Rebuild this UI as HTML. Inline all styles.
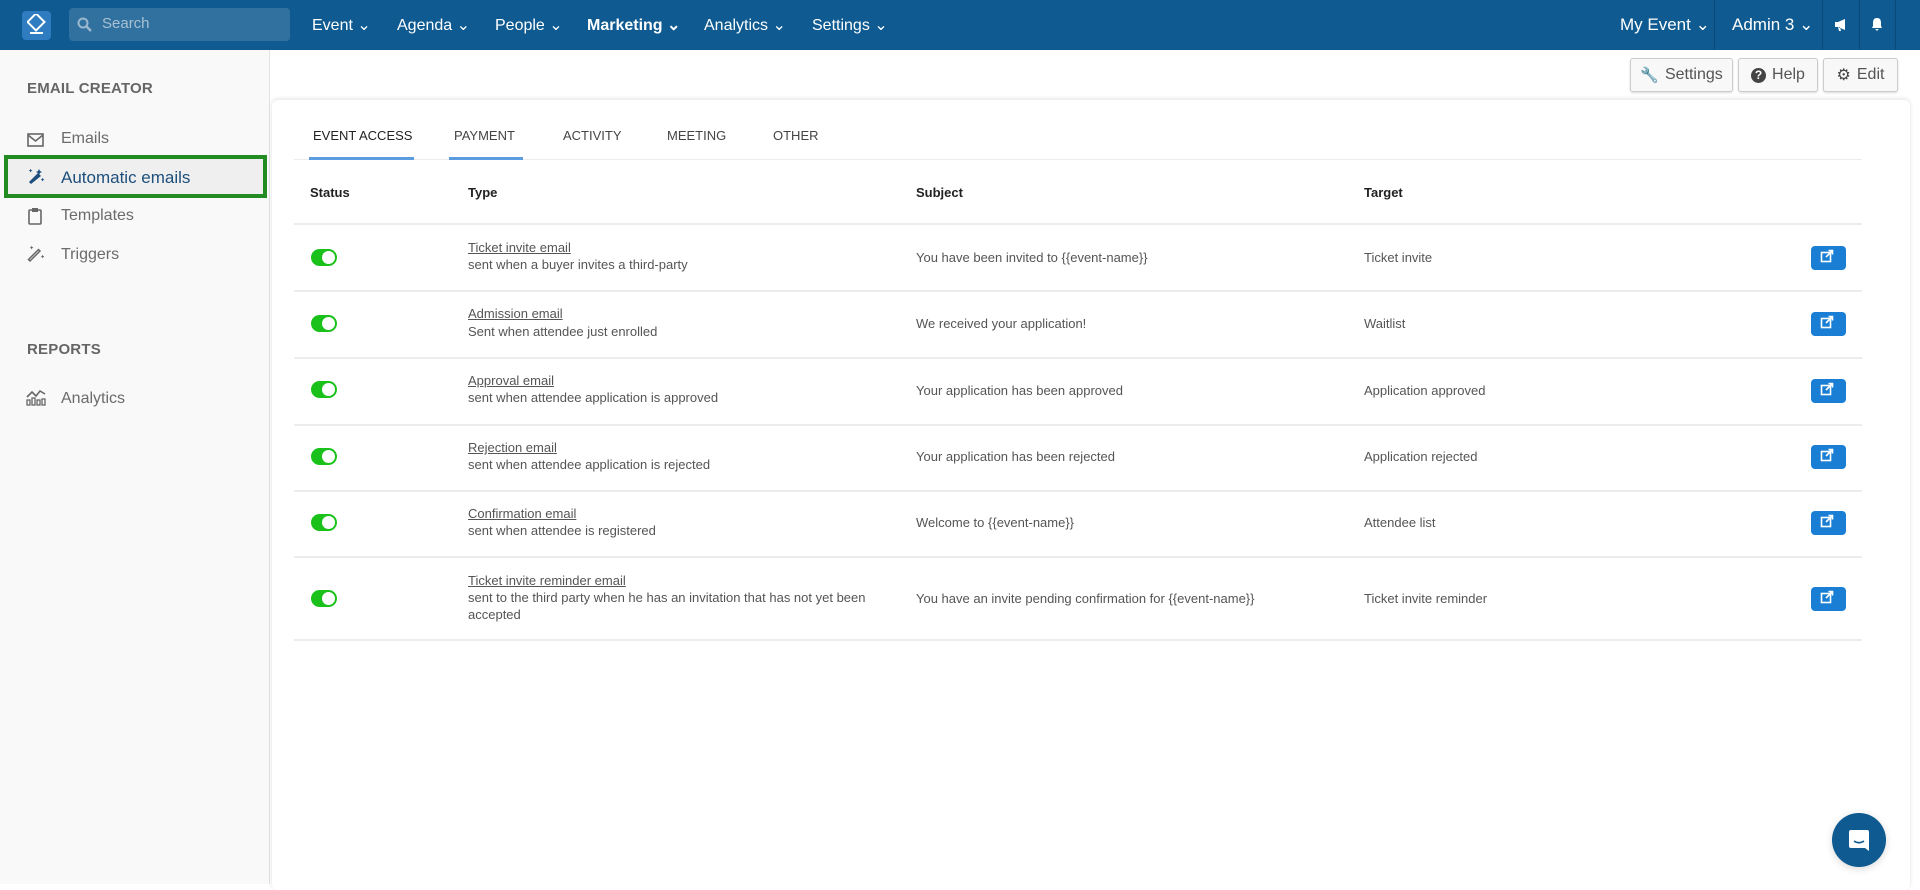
<!DOCTYPE html>
<html><head><meta charset="utf-8"><style>
*{box-sizing:border-box;margin:0;padding:0}
body{width:1920px;height:884px;overflow:hidden;background:#fff;font-family:"Liberation Sans",sans-serif;color:#333;position:relative}
.a{position:absolute;white-space:nowrap}
.top{position:absolute;left:0;top:0;width:1920px;height:50px;background:#0e5a91}
.nav{color:#fff;font-size:16px;top:15px}
.side{position:absolute;left:0;top:50px;width:270px;height:834px;background:#f9f9f9;border-right:1px solid #e3e3e3}
.sh{font-size:15px;color:#666;font-weight:bold;letter-spacing:.2px}
.si{font-size:16px;color:#6b6b6b}
.btn{position:absolute;top:58px;height:34px;border:1px solid #ccc;border-radius:3px;background:#f8f8f8;box-shadow:0 1px 2px rgba(0,0,0,.15);font-size:16px;color:#555;display:flex;align-items:center;justify-content:center;gap:6px}
.card{position:absolute;left:272px;top:100px;width:1638px;height:790px;border-radius:6px;box-shadow:0 -1px 5px rgba(0,0,0,.12);background:#fff}
.tab{font-size:13px;color:#444;top:128px}
.hd{font-size:13px;font-weight:bold;color:#222;top:185px}
.line{position:absolute;left:294px;width:1568px;height:2px;background:#ececec}
.td{font-size:13px;color:#555}
.t1{font-size:13px;color:#555;text-decoration:underline}
.tog{position:absolute;left:311px;width:26px;height:17px;border-radius:9px;background:#1bc11b}
.tog:after{content:"";position:absolute;right:2px;top:2px;width:13px;height:13px;border-radius:50%;background:#fff}
.eb{position:absolute;left:1811px;width:35px;height:24px;border-radius:4px;background:#1a7fd4}
</style></head><body>
<div class="top"></div>
<div class="a" style="left:22px;top:11px;width:29px;height:29px;border-radius:4px;background:#2f7dc0"></div>
<svg class="a" style="left:27px;top:14px" width="19" height="22" viewBox="0 0 19 22"><rect x="3" y="2" width="12" height="12" transform="rotate(45 9 8)" fill="none" stroke="#fff" stroke-width="2"/><rect x="3" y="18" width="13" height="2" fill="#fff"/></svg>
<div class="a" style="left:69px;top:8px;width:221px;height:33px;background:#30719f;border-radius:4px"></div>
<svg class="a" style="left:77px;top:17px" width="15" height="15" viewBox="0 0 15 15"><circle cx="6" cy="6" r="4.5" fill="none" stroke="#9bb8cf" stroke-width="2"/><line x1="9.5" y1="9.5" x2="14" y2="14" stroke="#9bb8cf" stroke-width="2.5"/></svg>
<div class="a" style="left:102px;top:15px;font-size:15px;color:#a9c1d4">Search</div>
<div class="a nav" style="left:312px">Event ⌄</div>
<div class="a nav" style="left:397px">Agenda ⌄</div>
<div class="a nav" style="left:495px">People ⌄</div>
<div class="a nav" style="left:587px;font-weight:bold">Marketing ⌄</div>
<div class="a nav" style="left:704px">Analytics ⌄</div>
<div class="a nav" style="left:812px">Settings ⌄</div>
<div class="a nav" style="left:1620px;font-size:17px">My Event ⌄</div>
<div class="a nav" style="left:1732px;font-size:17px">Admin 3 ⌄</div>
<div class="a" style="left:1714px;top:0;width:1px;height:50px;background:#0a4a78"></div>
<div class="a" style="left:1822px;top:0;width:1px;height:50px;background:#0a4a78"></div>
<div class="a" style="left:1859px;top:0;width:1px;height:50px;background:#0a4a78"></div>
<div class="a" style="left:1895px;top:0;width:1px;height:50px;background:#0a4a78"></div>
<svg class="a" style="left:1834px;top:18px" width="14" height="13" viewBox="0 0 14 13"><path d="M1 4h3l7-3v11l-7-3H1z M4 9l1 4h2l-1-4" fill="#fff"/></svg>
<svg class="a" style="left:1871px;top:17px" width="12" height="14" viewBox="0 0 12 14"><path d="M6 1c3 0 4 2 4 5v3l1 2H1l1-2V6c0-3 1-5 4-5z M4.5 12h3a1.5 1.5 0 0 1-3 0z" fill="#fff"/></svg>

<div class="side"></div>
<div class="a sh" style="left:27px;top:80px">EMAIL CREATOR</div>
<svg class="a" style="left:27px;top:133px" width="17" height="14" viewBox="0 0 17 14"><rect x="1" y="1" width="15" height="12" fill="none" stroke="#666" stroke-width="1.6"/><path d="M1 2l7.5 6L16 2" fill="none" stroke="#666" stroke-width="1.6"/></svg>
<div class="a si" style="left:61px;top:130px">Emails</div>
<div class="a" style="left:4px;top:155px;width:263px;height:43px;border:4px solid #228b22;background:#efefef"></div>
<svg class="a" style="left:27px;top:168px" width="18" height="18" viewBox="0 0 18 18"><path d="M4 16l-2-2 9-9 3 3z" fill="#1d4f7c"/><path d="M11 3l1-2 1 2 2 1-2 1-1 2-1-2-2-1z M3 2l.6-1.2L4.2 2l1.2.6-1.2.6L3.6 4.4 3 3.2 1.8 2.6z M15 11l.6-1.2.6 1.2 1.2.6-1.2.6-.6 1.2-.6-1.2-1.2-.6z" fill="#1d4f7c"/></svg>
<div class="a" style="left:61px;top:168px;font-size:17px;color:#1d4f7c">Automatic emails</div>
<svg class="a" style="left:28px;top:207px" width="14" height="18" viewBox="0 0 14 18"><rect x="1" y="3" width="12" height="14" rx="1" fill="none" stroke="#666" stroke-width="1.6"/><rect x="4" y="1" width="6" height="4" fill="#666"/></svg>
<div class="a si" style="left:61px;top:207px">Templates</div>
<svg class="a" style="left:27px;top:245px" width="18" height="18" viewBox="0 0 18 18"><path d="M3 16l-1.5-1.5 10-10L13 6z" fill="none" stroke="#666" stroke-width="1.5"/><path d="M4 2l.6-1.2.6 1.2 1.2.6-1.2.6L4.6 4.4 4 3.2 2.8 2.6z M15 11l.6-1.2.6 1.2 1.2.6-1.2.6-.6 1.2-.6-1.2-1.2-.6z" fill="#666"/></svg>
<div class="a si" style="left:61px;top:246px">Triggers</div>
<div class="a sh" style="left:27px;top:341px">REPORTS</div>
<svg class="a" style="left:25px;top:388px" width="21" height="18" viewBox="0 0 21 18"><path d="M2 9l5-5 4 4 4-5 5 3" fill="none" stroke="#666" stroke-width="1.6"/><rect x="2" y="12" width="3" height="5" fill="none" stroke="#666" stroke-width="1.3"/><rect x="7" y="10" width="3" height="7" fill="none" stroke="#666" stroke-width="1.3"/><rect x="12" y="12" width="3" height="5" fill="none" stroke="#666" stroke-width="1.3"/><rect x="17" y="11" width="3" height="6" fill="none" stroke="#666" stroke-width="1.3"/></svg>
<div class="a si" style="left:61px;top:390px">Analytics</div>

<div class="btn" style="left:1630px;width:103px"><span style="font-size:15px">🔧</span>Settings</div>
<div class="btn" style="left:1738px;width:80px"><span style="display:inline-block;width:15px;height:15px;border-radius:50%;background:#444;color:#fff;font-size:12px;font-weight:bold;text-align:center;line-height:15px">?</span>Help</div>
<div class="btn" style="left:1823px;width:75px"><span style="font-size:16px;color:#444">⚙</span>Edit</div>

<div class="card"></div>
<div class="a tab" style="left:313px;color:#222">EVENT ACCESS</div>
<div class="a tab" style="left:454px">PAYMENT</div>
<div class="a tab" style="left:563px">ACTIVITY</div>
<div class="a tab" style="left:667px">MEETING</div>
<div class="a tab" style="left:773px">OTHER</div>
<div class="line" style="top:159px;height:1px"></div>
<div class="a" style="left:309px;top:157px;width:105px;height:3px;background:#5b9be0"></div>
<div class="a" style="left:449px;top:157px;width:74px;height:3px;background:#5b9be0"></div>
<div class="a hd" style="left:310px">Status</div>
<div class="a hd" style="left:468px">Type</div>
<div class="a hd" style="left:916px">Subject</div>
<div class="a hd" style="left:1364px">Target</div>
<div class="line" style="top:223px"></div>

<div class="tog" style="top:249px"></div>
<div class="a t1" style="left:468px;top:240px">Ticket invite email</div>
<div class="a td" style="left:468px;top:257px">sent when a buyer invites a third-party</div>
<div class="a td" style="left:916px;top:250px">You have been invited to {{event-name}}</div>
<div class="a td" style="left:1364px;top:250px">Ticket invite</div>
<div class="eb" style="top:246px"></div>
<div class="line" style="top:290px"></div>

<div class="tog" style="top:315px"></div>
<div class="a t1" style="left:468px;top:306px">Admission email</div>
<div class="a td" style="left:468px;top:324px">Sent when attendee just enrolled</div>
<div class="a td" style="left:916px;top:316px">We received your application!</div>
<div class="a td" style="left:1364px;top:316px">Waitlist</div>
<div class="eb" style="top:312px"></div>
<div class="line" style="top:357px"></div>

<div class="tog" style="top:381px"></div>
<div class="a t1" style="left:468px;top:373px">Approval email</div>
<div class="a td" style="left:468px;top:390px">sent when attendee application is approved</div>
<div class="a td" style="left:916px;top:383px">Your application has been approved</div>
<div class="a td" style="left:1364px;top:383px">Application approved</div>
<div class="eb" style="top:379px"></div>
<div class="line" style="top:424px"></div>

<div class="tog" style="top:448px"></div>
<div class="a t1" style="left:468px;top:440px">Rejection email</div>
<div class="a td" style="left:468px;top:457px">sent when attendee application is rejected</div>
<div class="a td" style="left:916px;top:449px">Your application has been rejected</div>
<div class="a td" style="left:1364px;top:449px">Application rejected</div>
<div class="eb" style="top:445px"></div>
<div class="line" style="top:490px"></div>

<div class="tog" style="top:514px"></div>
<div class="a t1" style="left:468px;top:506px">Confirmation email</div>
<div class="a td" style="left:468px;top:523px">sent when attendee is registered</div>
<div class="a td" style="left:916px;top:515px">Welcome to {{event-name}}</div>
<div class="a td" style="left:1364px;top:515px">Attendee list</div>
<div class="eb" style="top:511px"></div>
<div class="line" style="top:556px"></div>

<div class="tog" style="top:590px"></div>
<div class="a t1" style="left:468px;top:573px">Ticket invite reminder email</div>
<div class="a td" style="left:468px;top:590px">sent to the third party when he has an invitation that has not yet been</div>
<div class="a td" style="left:468px;top:607px">accepted</div>
<div class="a td" style="left:916px;top:591px">You have an invite pending confirmation for {{event-name}}</div>
<div class="a td" style="left:1364px;top:591px">Ticket invite reminder</div>
<div class="eb" style="top:587px"></div>
<div class="line" style="top:639px"></div>

<svg class="a" style="left:1820px;top:249px" width="14" height="14" viewBox="0 0 14 14"><defs><g id="e"><rect x="1.5" y="3.5" width="9" height="9" fill="none" stroke="#fff" stroke-width="1.6"/><path d="M6 8l6-6M8.5 1.5h4v4" fill="none" stroke="#fff" stroke-width="1.6"/></g></defs><use href="#e"/></svg>
<svg class="a" style="left:1820px;top:315px" width="14" height="14"><use href="#e"/></svg>
<svg class="a" style="left:1820px;top:382px" width="14" height="14"><use href="#e"/></svg>
<svg class="a" style="left:1820px;top:448px" width="14" height="14"><use href="#e"/></svg>
<svg class="a" style="left:1820px;top:514px" width="14" height="14"><use href="#e"/></svg>
<svg class="a" style="left:1820px;top:590px" width="14" height="14"><use href="#e"/></svg>

<div class="a" style="left:1832px;top:813px;width:54px;height:54px;border-radius:50%;background:#0e5a91;box-shadow:0 2px 8px rgba(0,0,0,.15)"></div>
<svg class="a" style="left:1848px;top:829px" width="22" height="24" viewBox="0 0 22 24"><path d="M3 1h16a2 2 0 0 1 2 2v19l-4-3H3a2 2 0 0 1-2-2V3a2 2 0 0 1 2-2z" fill="#fff"/><path d="M6 12q5 3.5 10 0" fill="none" stroke="#0e5a91" stroke-width="1.6"/></svg>
</body></html>
